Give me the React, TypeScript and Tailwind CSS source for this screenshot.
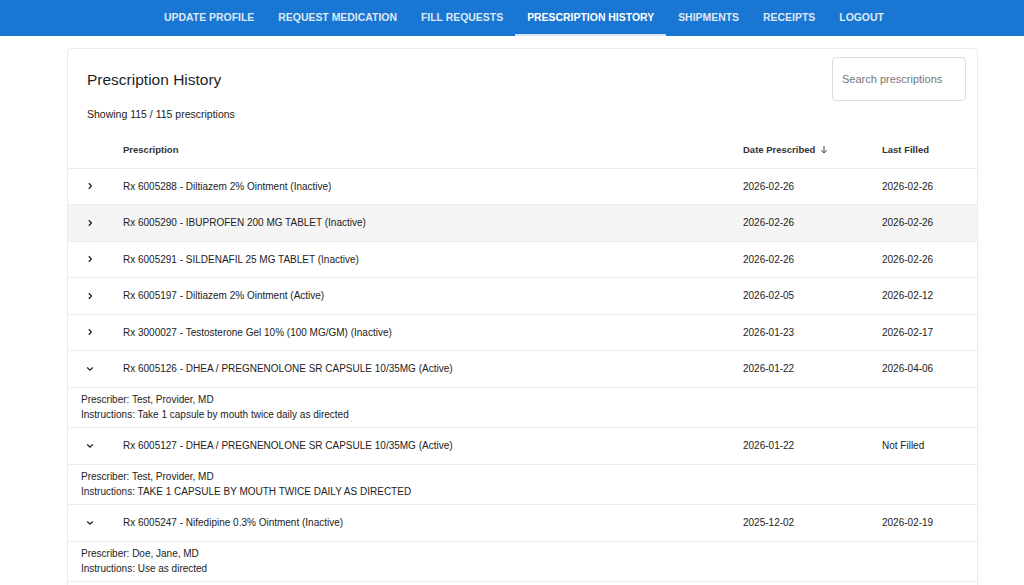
import React from "react";

const navItems = [
  "UPDATE PROFILE",
  "REQUEST MEDICATION",
  "FILL REQUESTS",
  "PRESCRIPTION HISTORY",
  "SHIPMENTS",
  "RECEIPTS",
  "LOGOUT",
];

type Row = {
  rx: string;
  date: string;
  filled: string;
  open?: boolean;
  hover?: boolean;
  prescriber?: string;
  instructions?: string;
};

const rows: Row[] = [
  { rx: "Rx 6005288 - Diltiazem 2% Ointment (Inactive)", date: "2026-02-26", filled: "2026-02-26" },
  { rx: "Rx 6005290 - IBUPROFEN 200 MG TABLET (Inactive)", date: "2026-02-26", filled: "2026-02-26", hover: true },
  { rx: "Rx 6005291 - SILDENAFIL 25 MG TABLET (Inactive)", date: "2026-02-26", filled: "2026-02-26" },
  { rx: "Rx 6005197 - Diltiazem 2% Ointment (Active)", date: "2026-02-05", filled: "2026-02-12" },
  { rx: "Rx 3000027 - Testosterone Gel 10% (100 MG/GM) (Inactive)", date: "2026-01-23", filled: "2026-02-17" },
  {
    rx: "Rx 6005126 - DHEA / PREGNENOLONE SR CAPSULE 10/35MG (Active)",
    date: "2026-01-22",
    filled: "2026-04-06",
    open: true,
    prescriber: "Test, Provider, MD",
    instructions: "Take 1 capsule by mouth twice daily as directed",
  },
  {
    rx: "Rx 6005127 - DHEA / PREGNENOLONE SR CAPSULE 10/35MG (Active)",
    date: "2026-01-22",
    filled: "Not Filled",
    open: true,
    prescriber: "Test, Provider, MD",
    instructions: "TAKE 1 CAPSULE BY MOUTH TWICE DAILY AS DIRECTED",
  },
  {
    rx: "Rx 6005247 - Nifedipine 0.3% Ointment (Inactive)",
    date: "2025-12-02",
    filled: "2026-02-19",
    open: true,
    prescriber: "Doe, Jane, MD",
    instructions: "Use as directed",
  },
];

function Chevron({ open }: { open?: boolean }) {
  return open ? (
    <svg width="8" height="8" viewBox="0 0 8 8" fill="none">
      <path d="M1.2 2.6 4 5.2 6.8 2.6" stroke="#222" strokeWidth="1.3" />
    </svg>
  ) : (
    <svg width="8" height="8" viewBox="0 0 8 8" fill="none">
      <path d="M2.8 1.2 5.4 4 2.8 6.8" stroke="#222" strokeWidth="1.3" />
    </svg>
  );
}

export default function App() {
  return (
    <div
      className="min-h-[585px] bg-white text-[#222]"
      style={{ fontFamily: '"Liberation Sans", Arial, sans-serif' }}
    >
      <nav className="flex h-[36px] bg-[#1976d2] pl-[152px]">
        {navItems.map((item) => {
          const active = item === "PRESCRIPTION HISTORY";
          return (
            <div
              key={item}
              className={`flex h-full items-center border-b-2 px-[12px] pt-[2px] text-[10.45px] font-bold ${
                active
                  ? "border-[#d6e6f7] text-white"
                  : "border-transparent text-[#dce8f6]"
              }`}
            >
              {item}
            </div>
          );
        })}
      </nav>

      <div className="pl-[67px] pt-[12px]">
        <div className="w-[911px] rounded-[4px] border border-[#ebebeb] pb-[10px]">
          <div className="flex items-start justify-between pl-[19px] pr-[11px] pt-[8px]">
            <h1 className="pt-[13px] text-[15.5px] leading-[20px] text-[#1f1f1f]">
              Prescription History
            </h1>
            <div className="flex h-[44px] w-[134px] items-center rounded-[4px] border border-[#dedede] pl-[9px] text-[11px] text-[#777]">
              Search prescriptions
            </div>
          </div>
          <div className="pl-[19px] pt-[7px] text-[10.5px] leading-[13px]">
            Showing 115 / 115 prescriptions
          </div>

          <div className="mt-[11px]">
            <div className="grid h-[36.5px] grid-cols-[55px_620px_139px_1fr] items-center border-b border-[#ececec] text-[9.5px] font-semibold text-[#333]">
              <div />
              <div>Prescription</div>
              <div className="flex items-center gap-[5px]">
                Date Prescribed
                <svg width="8" height="9" viewBox="0 0 8 9" fill="none">
                  <path d="M4 1v7M1.2 5.2 4 8l2.8-2.8" stroke="#444" strokeWidth="1" />
                </svg>
              </div>
              <div>Last Filled</div>
            </div>

            {rows.map((r) => (
              <React.Fragment key={r.rx}>
                <div
                  className={`grid h-[36.5px] grid-cols-[55px_620px_139px_1fr] items-center border-b border-[#ececec] text-[10px] ${
                    r.hover ? "bg-[#f5f5f5]" : ""
                  }`}
                >
                  <div className="flex pl-[18px]">
                    <Chevron open={r.open} />
                  </div>
                  <div>{r.rx}</div>
                  <div>{r.date}</div>
                  <div>{r.filled}</div>
                </div>
                {r.open && (
                  <div className="flex h-[40.5px] flex-col justify-center border-b border-[#ececec] pl-[13px] text-[10px] leading-[15px]">
                    <div>Prescriber: {r.prescriber}</div>
                    <div>Instructions: {r.instructions}</div>
                  </div>
                )}
              </React.Fragment>
            ))}
          </div>
        </div>
      </div>
    </div>
  );
}
